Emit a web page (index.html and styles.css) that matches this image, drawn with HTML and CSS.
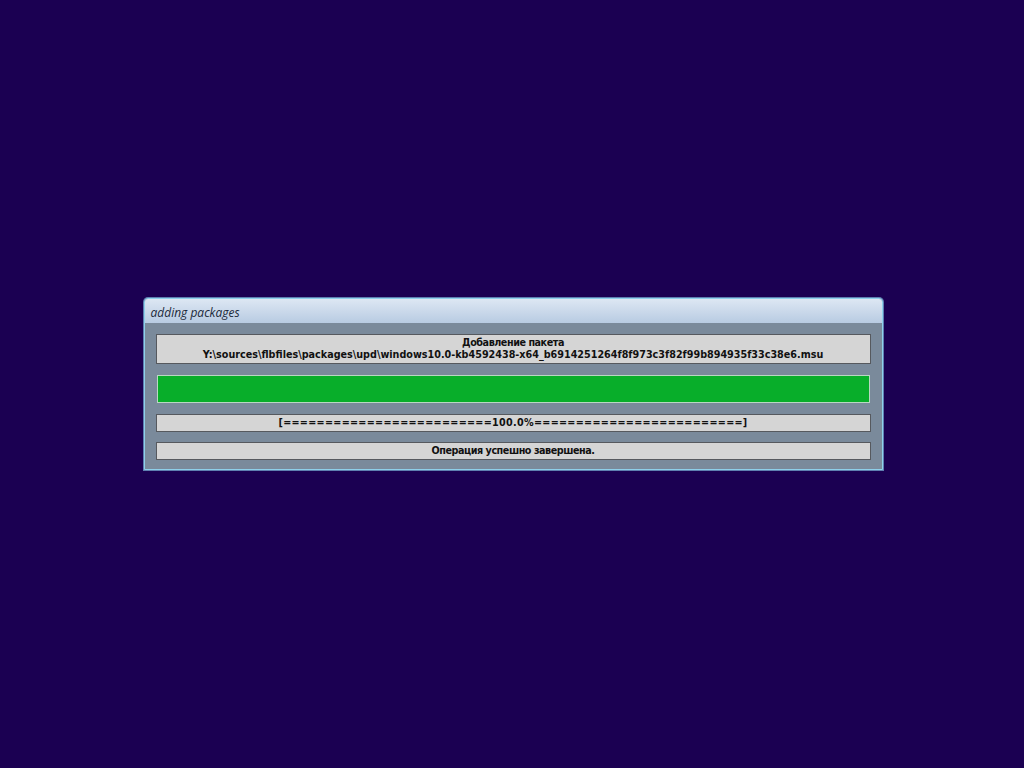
FILE: index.html
```html
<!DOCTYPE html>
<html lang="ru">
  <head>
    <meta charset="utf-8">
    <title>adding packages</title>
    <link rel="stylesheet" href="styles.css">
  </head>
  <body>
    <div class="tela">
      <div class="janela">
        <div class="titulo">adding packages</div>
        <div class="corpo">
          <div class="caixa pacote">
            <p class="cirilico">Добавление пакета</p>
            <p>Y:\sources\flbfiles\packages\upd\windows10.0-kb4592438-x64_b6914251264f8f973c3f82f99b894935f33c38e6.msu</p>
          </div>
          <div class="barra"><div class="preenchido" style="width: 100%"></div></div>
          <div class="caixa linha progresso">[=========================100.0%=========================]</div>
          <div class="caixa linha cirilico">Операция успешно завершена.</div>
        </div>
      </div>
    </div>
  </body>
</html>
```

FILE: styles.css
```css
* {
  margin: 0;
  box-sizing: border-box;
}

html,
body {
  height: 100%;
}

body {
  background: #1b0052;
  font-family: "DejaVu Sans Condensed", "DejaVu Sans", sans-serif;
}

.tela {
  display: flex;
  align-items: center;
  justify-content: center;
  height: 100%;
  padding-left: 2px;
}

.janela {
  width: 739px;
  border: 1px solid #8fd0ea;
  border-radius: 4px 4px 0 0;
  background: #7a8a9b;
  box-shadow: 0 0 0 1px #5f7fb0;
}

.titulo {
  height: 24px;
  padding: 5px 6px 0;
  background: linear-gradient(#dde7f3, #b8cbe2);
  border-radius: 3px 3px 0 0;
  font-family: "Open Sans", "Noto Sans", sans-serif;
  font-style: italic;
  font-size: 12px;
  color: #1c2a3a;
}

.corpo {
  display: flex;
  flex-direction: column;
  gap: 11px;
  padding: 11px 11px 9px;
}

.caixa {
  background: #d5d5d5;
  border: 1px solid #56595e;
  text-align: center;
  font-weight: bold;
  font-size: 10.7px;
  color: #111;
}

.pacote {
  height: 30px;
  padding-top: 2px;
  line-height: 12px;
}

.barra {
  height: 28px;
  margin: 0 1px;
  border: 1px solid #b9d8c2;
  background: #7a8a9b;
}

.preenchido {
  height: 100%;
  background: #08ae2a;
}

.linha {
  height: 18px;
  line-height: 16px;
}

.progresso {
  letter-spacing: 0.3px;
}

.cirilico {
  letter-spacing: -0.45px;
}

.linha + .linha {
  margin-top: -1px;
}
```
